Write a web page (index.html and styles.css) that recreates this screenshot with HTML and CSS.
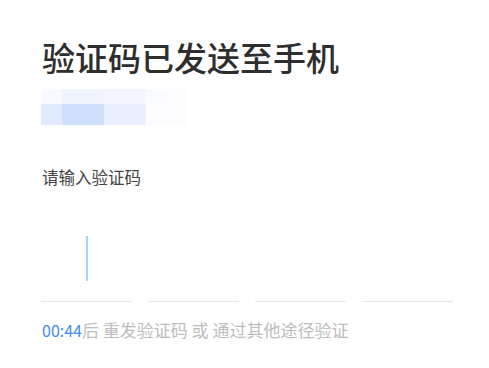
FILE: index.html
```html
<!DOCTYPE html>
<html lang="zh-CN">
<head>
    <meta charset="UTF-8">
    <meta name="viewport" content="width=device-width, initial-scale=1.0">
    <title>输入验证码</title>
    <link rel="stylesheet" href="styles.css">
</head>
<body>
    <div class="verify-page">
        <h1 class="verify-title">验证码已发送至手机</h1>

        <!-- masked phone number -->
        <div class="verify-phone">
            <span class="px c1"></span><span class="px c2"></span><span class="px c2"></span><span class="px c3"></span><span class="px c3"></span><span class="px c4"></span><span class="px c5"></span>
            <span class="px c6"></span><span class="px c7"></span><span class="px c7"></span><span class="px c8"></span><span class="px c8"></span><span class="px c5"></span><span class="px c5"></span>
        </div>

        <div class="verify-label">请输入验证码</div>

        <div class="code-boxes">
            <div class="code-box active"><span class="code-cursor"></span></div>
            <div class="code-box"></div>
            <div class="code-box"></div>
            <div class="code-box"></div>
        </div>

        <div class="verify-tip">
            <span class="countdown">00:44</span>后 重发验证码 或 通过其他途径验证
        </div>
    </div>
</body>
</html>
```

FILE: styles.css
```css
* {
    box-sizing: border-box;
    margin: 0;
    padding: 0;
}

body {
    background: #fff;
    font-family: "Noto Sans CJK SC", "Noto Sans", sans-serif;
    color: #333;
}

.verify-page {
    width: 412px;
    margin-left: 41px;
    padding-top: 35px;
}

.verify-title {
    font-size: 33px;
    font-weight: 500;
    line-height: 44px;
    color: #2e2e2e;
    margin-left: 1px;
}

.verify-phone {
    display: grid;
    grid-template-columns: repeat(7, 21px);
    grid-template-rows: 15px 21px;
    width: 147px;
    margin-top: 10px;
}

.px.c1 { background: #f8faff; }
.px.c2 { background: #eef3fe; }
.px.c3 { background: #f3f6fe; }
.px.c4 { background: #fafbff; }
.px.c5 { background: #fdfdff; }
.px.c6 { background: #e2ebfd; }
.px.c7 { background: #cfdffb; }
.px.c8 { background: #eaf0fe; }

.verify-label {
    margin-top: 41px;
    font-size: 16.5px;
    line-height: 22px;
    color: #444;
    margin-left: 1px;
}

.code-boxes {
    display: flex;
    gap: 16px;
    margin-top: 48px;
}

.code-box {
    flex: 1;
    height: 66px;
    border-bottom: 1px solid #e6e6e6;
    display: flex;
    justify-content: center;
    align-items: flex-start;
}

.code-cursor {
    width: 2px;
    height: 45px;
    background: #a9d0fb;
}

.verify-tip {
    margin-top: 17px;
    font-size: 17px;
    line-height: 22px;
    color: #bdbdbd;
    margin-left: 1px;
}

.countdown {
    font-size: 16px;
    color: #3d8ef0;
}
```
